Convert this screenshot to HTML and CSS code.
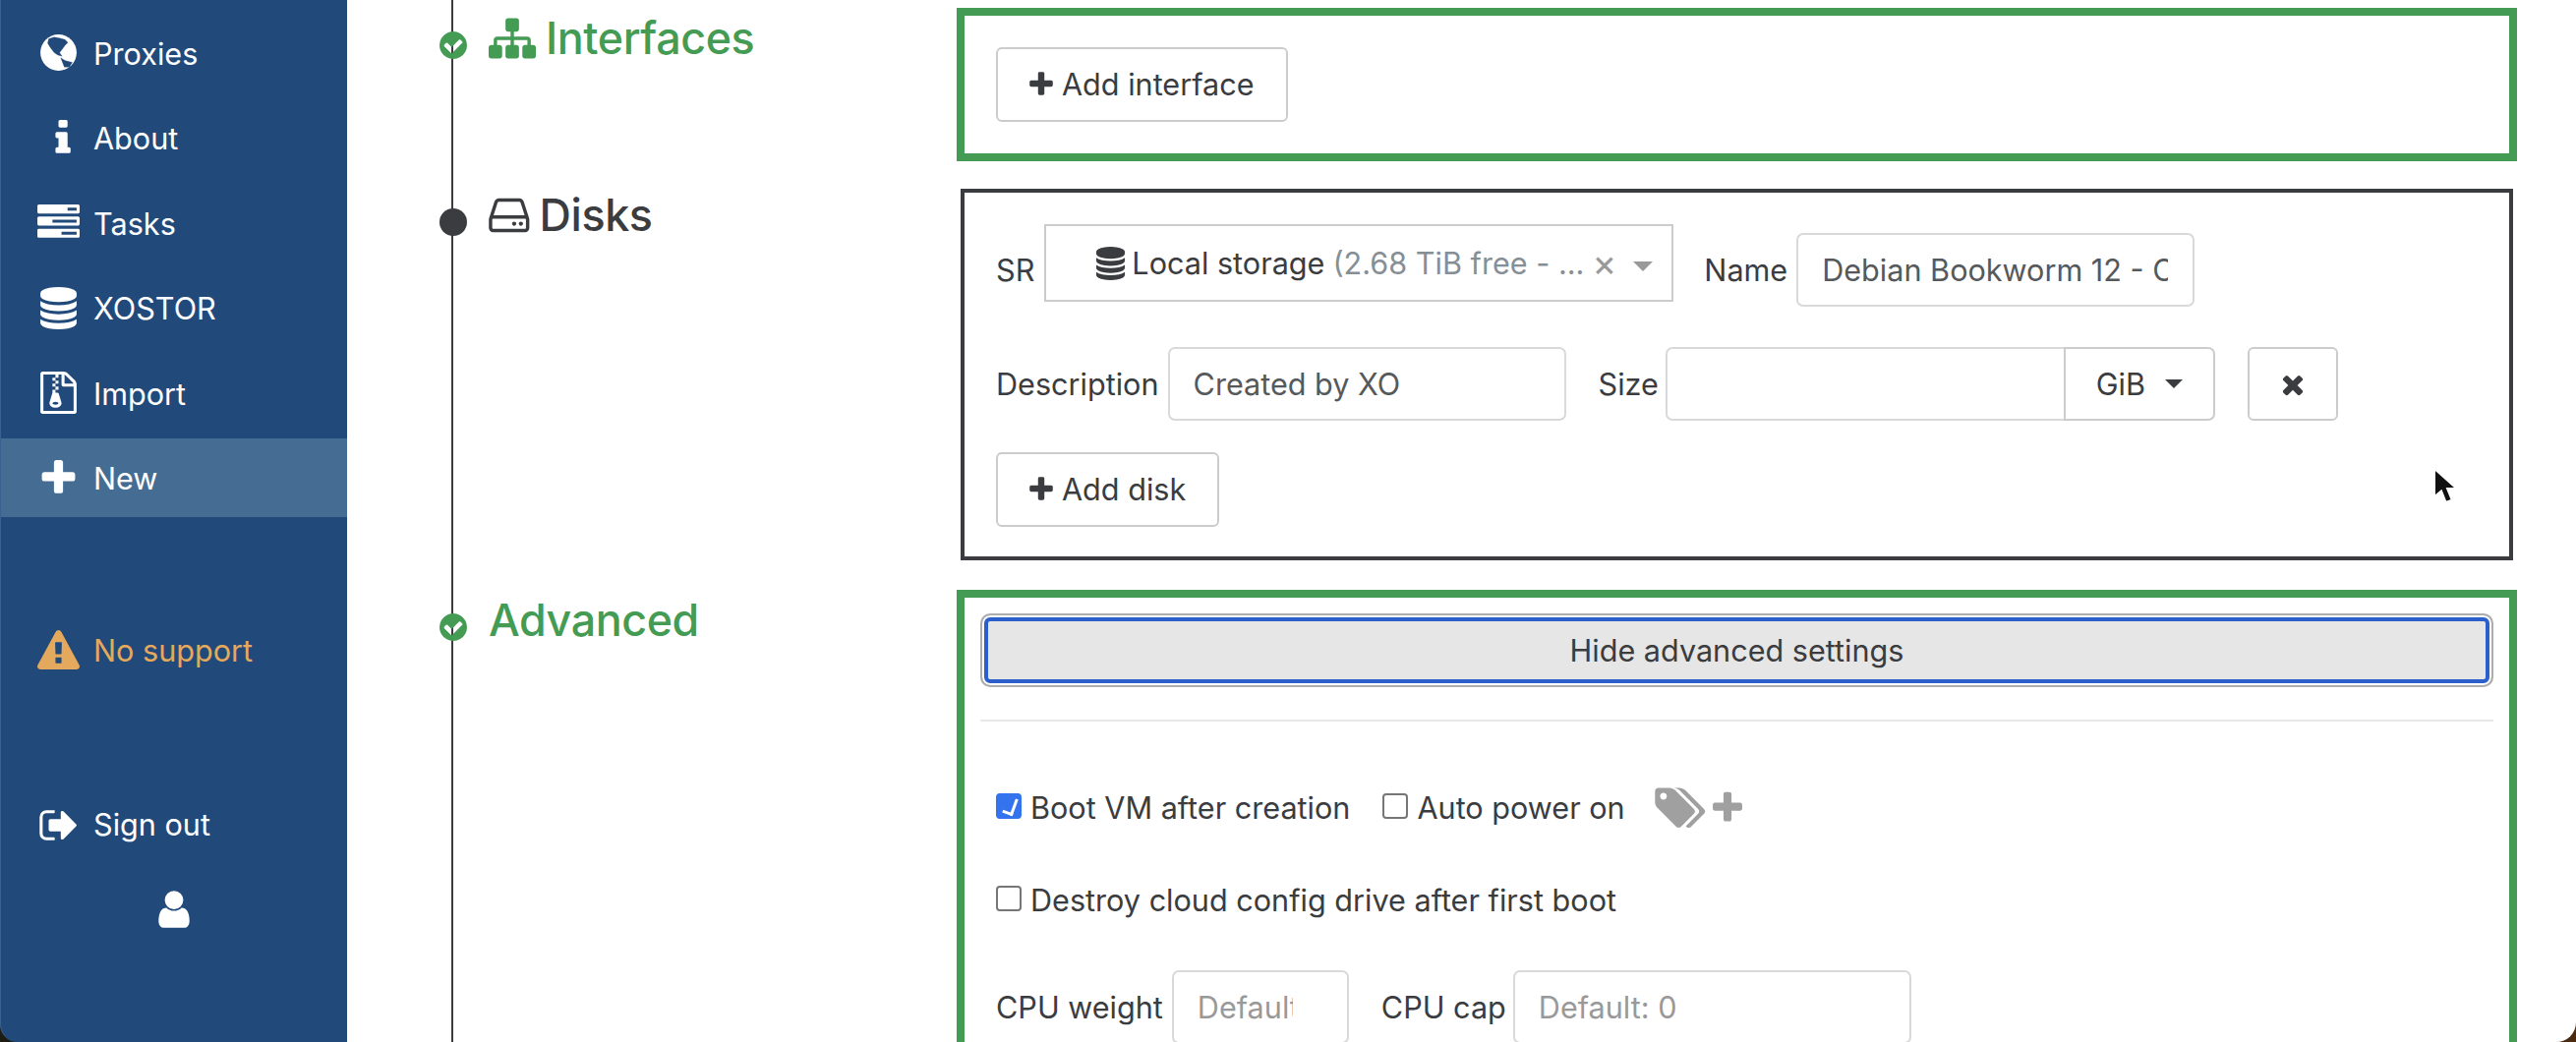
FILE: index.html
```html
<!DOCTYPE html>
<html lang="en">
<head>
<meta charset="utf-8">
<title>New VM</title>
<link rel="stylesheet" href="styles.css">
</head>
<body>
<svg class="defs" width="0" height="0" aria-hidden="true">
  <symbol id="i-plus" viewBox="0 0 1408 1792"><path d="M1408 736v192q0 40-28 68t-68 28h-416v416q0 40-28 68t-68 28h-192q-40 0-68-28t-28-68v-416h-416q-40 0-68-28t-28-68v-192q0-40 28-68t68-28h416v-416q0-40 28-68t68-28h192q40 0 68 28t28 68v416h416q40 0 68 28t28 68z"/></symbol>
  <symbol id="i-db" viewBox="0 0 1536 1792"><path d="M768 768q237 0 443-43t325-127v170q0 69-103 128t-280 93.500-385 34.500-385-34.500-280-93.500-103-128v-170q119 84 325 127t443 43zm0 768q237 0 443-43t325-127v170q0 69-103 128t-280 93.500-385 34.500-385-34.500-280-93.500-103-128v-170q119 84 325 127t443 43zm0-384q237 0 443-43t325-127v170q0 69-103 128t-280 93.500-385 34.500-385-34.500-280-93.500-103-128v-170q119 84 325 127t443 43zm0-1152q208 0 385 34.500t280 93.500 103 128v128q0 69-103 128t-280 93.500-385 34.500-385-34.500-280-93.500-103-128v-128q0-69 103-128t280-93.500 385-34.500z"/></symbol>
  <symbol id="i-check" viewBox="0 128 1536 1536"><path d="M1284 734q0-28-18-46l-91-90q-19-19-45-19t-45 19l-408 407-226-226q-19-19-45-19t-45 19l-91 90q-18 18-18 46 0 27 18 45l362 362q19 19 45 19 27 0 46-19l543-543q18-18 18-45zm252 162q0 209-103 385.500t-279.500 279.500-385.500 103-385.500-103-279.500-279.500-103-385.500 103-385.500 279.500-279.500 385.500-103 385.500 103 279.500 279.500 103 385.500z"/></symbol>
</svg>
<div class="app">
  <nav class="sidebar">
    <ul class="nav">
      <li class="nav-item">
        <svg class="nav-icon" viewBox="0 0 1536 1792"><circle cx="768" cy="896" r="768"/><path class="cut" d="M353 312L584 235 814 282 1044 343 1167 466 1044 589 968 696 891 804 814 896 922 1050 737 1003 584 896 430 696 307 497zM860 1111L1044 1234 1352 1311 1229 1510 1014 1510z"/></svg>
        <span>Proxies</span>
      </li>
      <li class="nav-item">
        <svg class="nav-icon" viewBox="320 0 768 1792"><path d="M1216 1344v128q0 26-19 45t-45 19h-512q-26 0-45-19t-19-45v-128q0-26 19-45t45-19h64v-384h-64q-26 0-45-19t-19-45v-128q0-26 19-45t45-19h384q26 0 45 19t19 45v576h64q26 0 45 19t19 45zm-128-1152v192q0 26-19 45t-45 19h-256q-26 0-45-19t-19-45v-192q0-26 19-45t45-19h256q26 0 45 19t19 45z"/></svg>
        <span>About</span>
      </li>
      <li class="nav-item">
        <svg class="nav-icon" viewBox="0 0 1792 1792"><path d="M1024 1408h640v-128h-640v128zm-384-512h1024v-128h-1024v128zm640-512h384v-128h-384v128zm512 832v256q0 26-19 45t-45 19h-1664q-26 0-45-19t-19-45v-256q0-26 19-45t45-19h1664q26 0 45 19t19 45zm0-512v256q0 26-19 45t-45 19h-1664q-26 0-45-19t-19-45v-256q0-26 19-45t45-19h1664q26 0 45 19t19 45zm0-512v256q0 26-19 45t-45 19h-1664q-26 0-45-19t-19-45v-256q0-26 19-45t45-19h1664q26 0 45 19t19 45z"/></svg>
        <span>Tasks</span>
      </li>
      <li class="nav-item">
        <svg class="nav-icon"><use href="#i-db"/></svg>
        <span>XOSTOR</span>
      </li>
      <li class="nav-item">
        <svg class="nav-icon" viewBox="0 0 1536 1792"><path d="M640 384v-128h-128v128h128zm128 128v-128h-128v128h128zm-128 128v-128h-128v128h128zm128 128v-128h-128v128h128zm700-388q28 28 48 76t20 88v1152q0 40-28 68t-68 28h-1344q-40 0-68-28t-28-68v-1600q0-40 28-68t68-28h896q40 0 88 20t76 48zm-444-244v376h376q-10-29-22-41l-313-313q-12-12-41-22zm384 1528v-1024h-416q-40 0-68-28t-28-68v-416h-128v128h-128v-128h-512v1536h1280zm-627-721l107 349q8 27 8 52 0 83-72.500 137.500t-183.500 54.500-183.500-54.500-72.500-137.500q0-25 8-52 21-63 120-396v-128h128v128h79q22 0 39 13t23 34zm-141 465q53 0 90.500-19t37.500-45-37.500-45-90.500-19-90.500 19-37.500 45 37.500 45 90.500 19z"/></svg>
        <span>Import</span>
      </li>
      <li class="nav-item active">
        <svg class="nav-icon"><use href="#i-plus"/></svg>
        <span>New</span>
      </li>
    </ul>
    <div class="nav-item warn">
      <svg class="nav-icon" viewBox="0 0 1792 1792"><path d="M1024 1375v-190q0-14-9.500-23.500t-22.500-9.500h-192q-13 0-22.500 9.500t-9.500 23.500v190q0 14 9.500 23.500t22.500 9.500h192q13 0 22.500-9.500t9.500-23.500zm-2-374l18-459q0-12-10-19-13-11-24-11h-220q-11 0-24 11-10 7-10 21l17 457q0 10 10 16.500t24 6.500h185q14 0 23.500-6.500t10.500-16.500zm-14-934l768 1408q35 63-2 126-17 29-46.500 46t-63.500 17h-1536q-34 0-63.500-17t-46.500-46q-37-63-2-126l768-1408q17-31 47-49t65-18 65 18 47 49z"/></svg>
      <span>No support</span>
    </div>
    <div class="nav-item signout">
      <svg class="nav-icon" viewBox="0 0 1664 1792"><path d="M672 1440q0 4 1 20t.5 26.500-3 23.500-10 19.500-20.500 6.500h-320q-119 0-203.500-84.500t-84.500-203.500v-704q0-119 84.500-203.500t203.500-84.500h320q13 0 22.500 9.500t9.500 22.500q0 4 1 20t.5 26.500-3 23.500-10 19.500-20.500 6.500h-320q-66 0-113 47t-47 113v704q0 66 47 113t113 47h312l11.500 1 11.500 3 8 5.500 7 9 2 13.500zm928-544q0 26-19 45l-544 544q-19 19-45 19t-45-19-19-45v-288h-448q-26 0-45-19t-19-45v-384q0-26 19-45t45-19h448v-288q0-26 19-45t45-19 45 19l544 544q19 19 19 45z"/></svg>
      <span>Sign out</span>
    </div>
    <div class="user-row">
      <svg class="user-icon" viewBox="256 0 1280 1792"><path d="M1536 1399q0 109-62.500 187t-150.500 78h-854q-88 0-150.500-78t-62.500-187q0-85 8.500-160.500t31.500-152 58.500-131 94-89 134.500-34.500q131 128 313 128t313-128q76 0 134.500 34.500t94 89 58.500 131 31.500 152 8.500 160.500zm-256-887q0 159-112.500 271.500t-271.500 112.500-271.500-112.500-112.500-271.500 112.500-271.500 271.500-112.500 271.500 112.500 112.500 271.500z"/></svg>
    </div>
  </nav>
  <main class="main">
    <section class="step done">
      <svg class="dot"><use href="#i-check"/></svg>
      <h2 class="step-title">
        <svg class="title-icon sitemap" viewBox="0 0 1792 1792"><path d="M1792 1248v320q0 40-28 68t-68 28h-320q-40 0-68-28t-28-68v-320q0-40 28-68t68-28h96v-192h-512v192h96q40 0 68 28t28 68v320q0 40-28 68t-68 28h-320q-40 0-68-28t-28-68v-320q0-40 28-68t68-28h96v-192h-512v192h96q40 0 68 28t28 68v320q0 40-28 68t-68 28h-320q-40 0-68-28t-28-68v-320q0-40 28-68t68-28h96v-192q0-52 38-90t90-38h512v-192h-96q-40 0-68-28t-28-68v-320q0-40 28-68t68-28h320q40 0 68 28t28 68v320q0 40-28 68t-68 28h-96v192h512q52 0 90 38t38 90v192h96q40 0 68 28t28 68z"/></svg>
        <span>Interfaces</span>
      </h2>
      <div class="box box-done">
        <button class="btn" type="button"><svg class="btn-plus"><use href="#i-plus"/></svg>Add interface</button>
      </div>
    </section>

    <section class="step current">
      <span class="dot dot-plain"></span>
      <h2 class="step-title">
        <svg class="title-icon hdd" viewBox="128 0 1536 1792"><path d="M1168 1216q0 33-23.500 56.500t-56.500 23.500-56.500-23.500-23.500-56.500 23.500-56.500 56.500-23.500 56.500 23.500 23.500 56.500zm256 0q0 33-23.500 56.500t-56.500 23.500-56.500-23.500-23.500-56.500 23.500-56.500 56.500-23.500 56.500 23.500 23.500 56.500zm112 160v-320q0-13-9.500-22.500t-22.500-9.500h-1216q-13 0-22.500 9.500t-9.500 22.500v320q0 13 9.500 22.500t22.500 9.500h1216q13 0 22.500-9.500t9.500-22.500zm-1230-480h1180l-157-482q-4-13-16-21.500t-26-8.500h-782q-14 0-26 8.500t-16 21.500zm1358 160v320q0 66-47 113t-113 47h-1216q-66 0-113-47t-47-113v-320q0-25 16-75l197-606q17-53 63-86t101-33h782q55 0 101 33t63 86l197 606q16 50 16 75z"/></svg>
        <span>Disks</span>
      </h2>
      <div class="box box-current">
        <div class="form-row row-sr">
          <label class="lbl">SR</label>
          <div class="select">
            <svg class="select-db"><use href="#i-db"/></svg>
            <span class="select-main">Local storage</span>
            <span class="select-sub">(2.68 TiB free - ...</span>
            <span class="select-clear">×</span>
            <span class="select-arrow"></span>
          </div>
          <label class="lbl lbl-next">Name</label>
          <input class="field" type="text" value="Debian Bookworm 12 - Cloud-init" readonly>
        </div>
        <div class="form-row row-desc">
          <label class="lbl">Description</label>
          <input class="field" type="text" value="Created by XO" readonly>
          <label class="lbl lbl-next lbl-size">Size</label>
          <div class="size-group">
            <input class="field field-size" type="text" readonly>
            <span class="size-unit">GiB<span class="caret"></span></span>
          </div>
          <button class="btn btn-remove" type="button" aria-label="Remove"><svg viewBox="0 0 1408 1792"><path d="M1298 1322q0 40-28 68l-136 136q-28 28-68 28t-68-28l-294-294-294 294q-28 28-68 28t-68-28l-136-136q-28-28-28-68t28-68l294-294-294-294q-28-28-28-68t28-68l136-136q28-28 68-28t68 28l294 294 294-294q28-28 68-28t68 28l136 136q28 28 28 68t-28 68l-294 294 294 294q28 28 28 68z"/></svg></button>
        </div>
        <button class="btn btn-disk" type="button"><svg class="btn-plus"><use href="#i-plus"/></svg>Add disk</button>
      </div>
    </section>

    <section class="step done">
      <svg class="dot"><use href="#i-check"/></svg>
      <h2 class="step-title"><span>Advanced</span></h2>
      <div class="box box-done box-advanced">
        <button class="btn-toggle" type="button">Hide advanced settings</button>
        <hr class="rule">
        <div class="check-row row-boot">
          <label class="check"><input type="checkbox" checked>Boot VM after creation</label>
          <label class="check"><input type="checkbox">Auto power on</label>
          <span class="tags">
            <svg class="tags-icon" viewBox="0 0 1920 1792"><path d="M448 448q0-53-37.500-90.500t-90.500-37.500-90.500 37.500-37.500 90.500 37.500 90.500 90.500 37.500 90.500-37.500 37.500-90.500zm1067 576q0 53-37 90l-491 492q-39 37-91 37-53 0-90-37l-715-716q-38-37-64.500-101t-26.500-117v-416q0-52 38-90t90-38h416q53 0 117 26.500t102 64.500l715 714q37 39 37 91zm384 0q0 53-37 90l-491 492q-39 37-91 37-36 0-59-14t-53-45l470-470q37-37 37-90 0-52-37-91l-715-714q-38-38-102-64.500t-117-26.500h224q53 0 117 26.500t102 64.500l715 714q37 39 37 91z"/></svg>
            <svg class="tags-plus"><use href="#i-plus"/></svg>
          </span>
        </div>
        <div class="check-row row-destroy">
          <label class="check"><input type="checkbox">Destroy cloud config drive after first boot</label>
        </div>
        <div class="form-row row-cpu">
          <label class="lbl">CPU weight</label>
          <input class="field field-weight" type="text" placeholder="Default: 256" readonly>
          <label class="lbl lbl-next lbl-cap">CPU cap</label>
          <input class="field" type="text" placeholder="Default: 0" readonly>
        </div>
      </div>
    </section>
  </main>
</div>
<svg class="cursor" viewBox="1 0 19 31"><path d="M2 1v24l6-5 4 10 5-2-4-10h8z" fill="#111" stroke="#fff" stroke-width="1.500"/></svg>
</body>
</html>
```

FILE: styles.css
```css
* { box-sizing: border-box; }
html, body { margin: 0; height: 100%; overflow: hidden; }
body {
  background: linear-gradient(90deg, #1c1c12 0 50%, #4a2a10 50% 100%);
  color: #3a3c3f;
  font-family: Inter, "Liberation Sans", sans-serif;
  font-size: 30.6px;
  line-height: 1.5;
}
.defs { position: absolute; }
.app { display: flex; height: 1060px; }

/* sidebar */
.sidebar {
  width: 353px;
  flex: none;
  padding-top: 13.5px;
  border-left: 1px solid #3a6190;
  background: #214a7b;
  color: #fff;
  border-bottom-left-radius: 18px;
}
.nav { list-style: none; margin: 0; padding: 0; display: flex; flex-direction: column; gap: 6.5px; }
.nav-item {
  display: flex;
  align-items: center;
  height: 80px;
  padding-left: 31px;
}
.nav .nav-item span { padding-top: 2px; }
.nav-item.active { background: #456d94; }
.nav-icon {
  width: 55px;
  height: 43px;
  margin-right: 8px;
  flex: none;
  fill: currentColor;
}
.warn { margin-top: 96px; color: #e4a95c; }
.signout { margin-top: 97px; }
.user-row { display: flex; justify-content: center; align-items: center; height: 86px; margin-top: 3px; }
.user-icon { width: 32px; height: 44px; fill: #fff; }
.cut { fill: #214a7b; stroke: #214a7b; stroke-width: 10; stroke-linejoin: round; }

/* main */
.main {
  flex: 1;
  min-width: 0;
  padding: 8px 60px 0 0;
  background: #fff;
  display: flex;
  flex-direction: column;
  gap: 24px;
  position: relative;
  overflow: hidden;
  border-bottom-right-radius: 20px;
}
.main::before {
  content: "";
  position: absolute;
  left: 106px;
  top: 0;
  bottom: 0;
  width: 2px;
  background: #3a3c3f;
}
.step {
  position: relative;
  display: grid;
  grid-template-columns: 620px 1fr;
  align-items: start;
}
.dot {
  position: absolute;
  left: 94px;
  top: 24px;
  width: 28px;
  height: 28px;
  fill: currentColor;
}
.dot-plain { border-radius: 50%; background: #3a3c3f; }
.step-title {
  display: flex;
  align-items: center;
  gap: 10px;
  margin: 0 0 0 144px;
  font-size: 44.8px;
  font-weight: 500;
  line-height: 62px;
  letter-spacing: -.4px;
}
.done { color: #449b53; }
.title-icon { height: 48px; fill: currentColor; flex: none; }
.sitemap { width: 48px; }
.hdd { width: 41.6px; }

.box { background: #fff; color: #3a3c3f; }
.box-done { border: 8px solid #449b53; padding: 32px; }
.box-current {
  border: 4px solid #3a3c3f;
  margin: 4px 4px 6px;
  padding: 32px 32px 30px;
}
.box-advanced { padding: 16px; }

/* buttons */
.btn {
  display: inline-flex;
  align-items: center;
  height: 76px;
  padding: 0 32px;
  border: 2px solid #ccc;
  border-radius: 6px;
  background: #fff;
  color: #3a3c3f;
  font: inherit;
}
.btn-plus { width: 24px; height: 30px; margin-right: 9px; fill: currentColor; }
.btn-remove { width: 92px; height: 75px; justify-content: center; padding: 0; margin-left: 33px; }
.btn-remove svg { width: 24px; height: 32px; fill: currentColor; }
.btn-toggle {
  display: block;
  width: 100%;
  height: 75px;
  border: 2px solid #adadad;
  border-radius: 10px;
  background: #e6e6e6;
  color: #3a3c3f;
  font: inherit;
  box-shadow: inset 0 0 0 2px #fff, inset 0 0 0 6px #2b5fcb;
}
.rule { margin: 33px 0 0; border: 0; border-top: 2px solid #e8e8e8; }

/* forms */
.form-row { display: flex; align-items: flex-end; }
.lbl { line-height: 75px; margin-right: 9px; white-space: nowrap; }
.lbl-next { margin-left: 31px; }
.lbl-size { margin-left: 33px; margin-right: 7px; }
.lbl-cap { margin-left: 33px; margin-right: 7px; }
.field {
  width: 405px;
  height: 75px;
  padding: 0 25px 0 24px;
  border: 2px solid #d9d9d9;
  border-radius: 7px;
  background: #fff;
  color: #55595c;
  font: inherit;
  min-width: 0;
}
.field::placeholder { color: #999; opacity: 1; }
.field-weight { width: 180px; padding-right: 55px; }
.select {
  display: flex;
  align-items: center;
  width: 640px;
  height: 79px;
  margin: 0 0 5px 1px;
  padding-left: 51px;
  border: 2px solid #ccc;
  white-space: nowrap;
  position: relative;
}
.select-db { width: 29px; height: 34px; margin-right: 7px; fill: currentColor; flex: none; }
.select-main { margin-right: 8px; }
.select-sub { color: #868e96; }
.select-clear { position: absolute; left: 555px; color: #999; font-size: 38px; }
.select-arrow {
  position: absolute;
  left: 597px;
  top: 36px;
  border: 10px solid transparent;
  border-top: 10px solid #999;
  border-bottom: 0;
}
.row-sr { margin-bottom: 41px; }
.row-desc { margin-bottom: 32px; }
.size-group { display: flex; width: 559px; }
.field-size { flex: 1; border-radius: 7px 0 0 7px; border-right: 0; }
.size-unit {
  display: flex;
  align-items: center;
  justify-content: center;
  width: 154px;
  height: 75px;
  border: 2px solid #ccc;
  border-radius: 0 7px 7px 0;
}
.caret {
  margin-left: 20px;
  border: 9px solid transparent;
  border-top: 9px solid #3a3c3f;
  border-bottom: 0;
}
.btn-disk { height: 76px; }

.check-row { display: flex; align-items: center; padding-left: 16px; height: 42px; }
.row-boot { margin-top: 67px; }
.row-destroy { margin-top: 52px; }
.row-cpu { margin-top: 50px; padding-left: 16px; }
.check { display: flex; align-items: center; margin-right: 33px; }
.check input {
  appearance: none;
  width: 26px;
  height: 26px;
  margin: -5px 9px 0 0;
  border: 2px solid #767676;
  border-radius: 4px;
  background: #fff;
  position: relative;
  flex: none;
}
.check input:checked { background: #3373ee; border-color: #3373ee; }
.check input:checked::after {
  content: "";
  position: absolute;
  left: 7px;
  top: 2px;
  width: 8px;
  height: 15px;
  border: solid #fff;
  border-width: 0 3px 3px 0;
  transform: rotate(20deg);
}
.tags { display: flex; align-items: center; margin-left: -3px; color: #a0a0a0; fill: currentColor; }
.tags-icon { width: 52px; height: 48px; margin-right: 7px; }
.tags-plus { width: 30px; height: 38px; }

.cursor { position: absolute; left: 2474px; top: 476px; width: 24px; height: 36px; }
```
